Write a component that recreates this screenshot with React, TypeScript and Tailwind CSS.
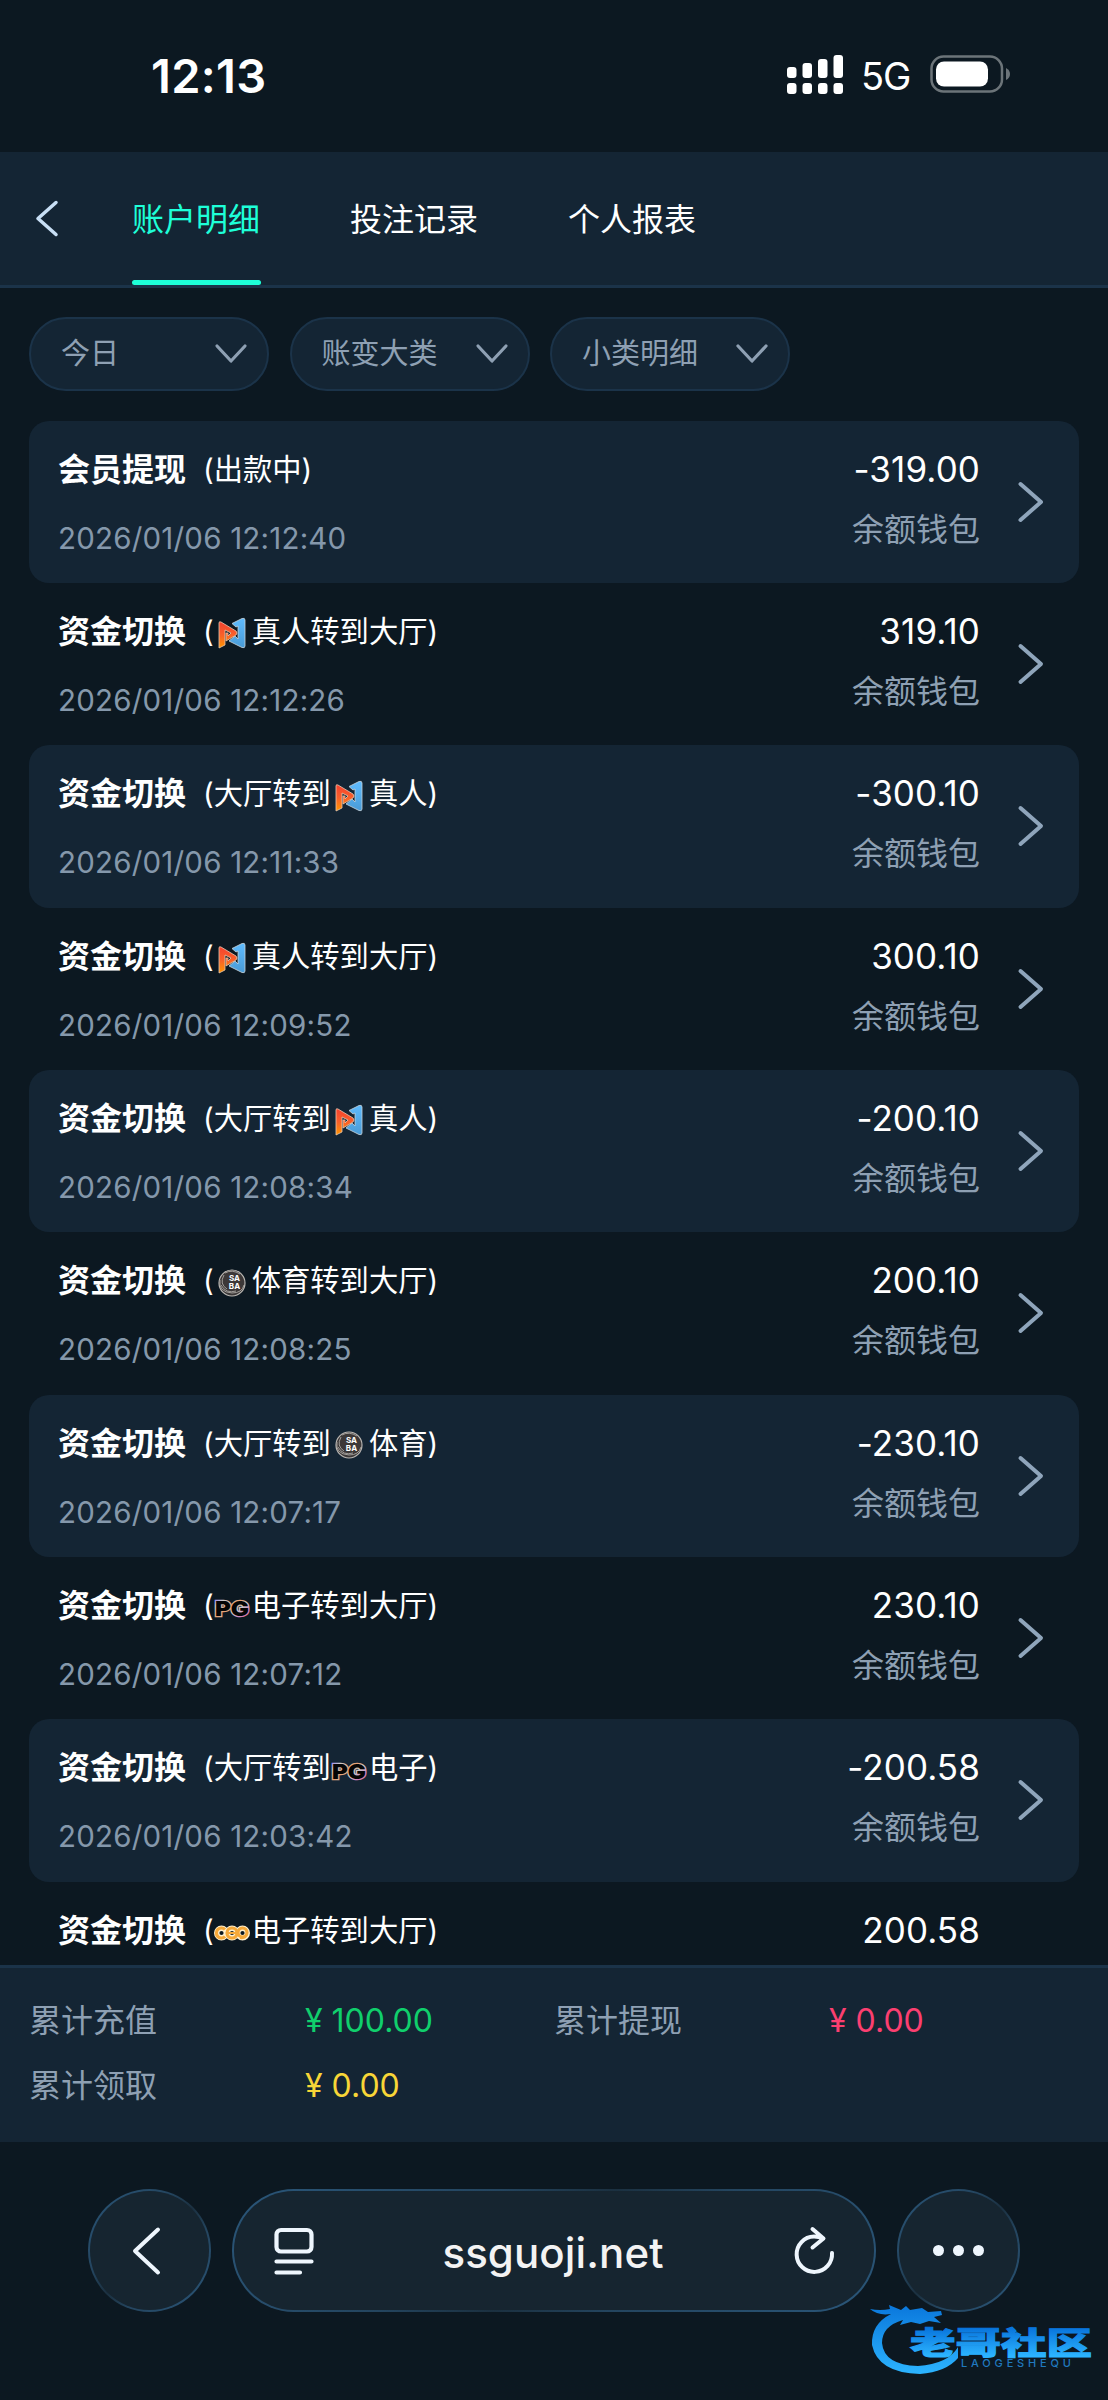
import { ReactNode } from 'react'

type Brand = 'n' | 'saba' | 'pg' | 'cq'

const records: {
  title: string
  from?: string
  brand?: Brand
  to: string
  time?: string
  amount: string
}[] = [
  { title: '会员提现', to: '出款中', time: '2026/01/06 12:12:40', amount: '-319.00' },
  { title: '资金切换', brand: 'n', to: '真人转到大厅', time: '2026/01/06 12:12:26', amount: '319.10' },
  { title: '资金切换', from: '大厅转到', brand: 'n', to: '真人', time: '2026/01/06 12:11:33', amount: '-300.10' },
  { title: '资金切换', brand: 'n', to: '真人转到大厅', time: '2026/01/06 12:09:52', amount: '300.10' },
  { title: '资金切换', from: '大厅转到', brand: 'n', to: '真人', time: '2026/01/06 12:08:34', amount: '-200.10' },
  { title: '资金切换', brand: 'saba', to: '体育转到大厅', time: '2026/01/06 12:08:25', amount: '200.10' },
  { title: '资金切换', from: '大厅转到', brand: 'saba', to: '体育', time: '2026/01/06 12:07:17', amount: '-230.10' },
  { title: '资金切换', brand: 'pg', to: '电子转到大厅', time: '2026/01/06 12:07:12', amount: '230.10' },
  { title: '资金切换', from: '大厅转到', brand: 'pg', to: '电子', time: '2026/01/06 12:03:42', amount: '-200.58' },
  { title: '资金切换', brand: 'cq', to: '电子转到大厅', amount: '200.58' },
]

const tabs = ['账户明细', '投注记录', '个人报表']
const filters = ['今日', '账变大类', '小类明细']

const BrandIcon = ({ brand }: { brand: Brand }) => {
  if (brand === 'n') {
    return (
      <svg viewBox="0 0 36 36" className="w-9 h-9">
        <defs>
          <linearGradient id="nOrange" x1="0" y1="0" x2="0" y2="1">
            <stop offset="0" stopColor="#f5412f" />
            <stop offset="0.5" stopColor="#f8602a" />
            <stop offset="1" stopColor="#ff9600" />
          </linearGradient>
          <linearGradient id="nBlue" x1="0" y1="0" x2="0" y2="1">
            <stop offset="0" stopColor="#5fbcff" />
            <stop offset="1" stopColor="#4a9bd6" />
          </linearGradient>
        </defs>
        <path d="M18 8.500L28 3.500Q31 2.500 31 5V31Q31 33.500 28 32.500L15 26L21 21L24 24V11L22 12Z" fill="url(#nBlue)" stroke="#c8d4dc" strokeWidth="0.800" />
        <path d="M5 8Q5 6 7 7L22 16Q24 18 22 20L12 26V18H14V21L17 18L11 15V30L5 33Z" fill="url(#nOrange)" stroke="#e8c8b0" strokeWidth="0.800" />
      </svg>
    )
  }
  if (brand === 'saba') {
    return (
      <svg viewBox="0 0 36 36" className="w-9 h-9">
        <circle cx="18" cy="18" r="13" fill="#3c3838" stroke="#b9b6b2" strokeWidth="1.200" />
        <path d="M6 15Q4 27 18 28Q28 28 30 20M7 20Q12 29 22 26M10 10Q5 19 13 24M11 8Q18 4 26 9" fill="none" stroke="#aaa7a3" strokeWidth="0.900" />
        <text x="20.500" y="16" textAnchor="middle" fontSize="8" fontWeight="700" fill="#fff">SA</text>
        <text x="20.500" y="23.500" textAnchor="middle" fontSize="8" fontWeight="700" fill="#fff">BA</text>
      </svg>
    )
  }
  if (brand === 'pg') {
    return (
      <svg viewBox="0 0 36 36" className="w-9 h-9 overflow-visible">
        <defs>
          <linearGradient id="pgEdge" x1="0" y1="0" x2="1" y2="1">
            <stop offset="0" stopColor="#8a6cff" />
            <stop offset="0.200" stopColor="#c9c9c9" />
            <stop offset="0.450" stopColor="#e9a070" />
            <stop offset="0.600" stopColor="#c9c9c9" />
            <stop offset="0.800" stopColor="#d07fc0" />
            <stop offset="1" stopColor="#ff7a35" />
          </linearGradient>
        </defs>
        <text
          x="1"
          y="26.500"
          fontSize="20"
          fontWeight="900"
          textLength="34"
          lengthAdjust="spacingAndGlyphs"
          fill="#050505"
          stroke="url(#pgEdge)"
          strokeWidth="2.400"
          paintOrder="stroke"
        >
          PG
        </text>
      </svg>
    )
  }
  return (
    <svg viewBox="0 0 36 36" className="w-9 h-9">
      <g fill="none" stroke="#fff0cf" strokeWidth="5.400">
        <circle cx="7.500" cy="19" r="4.800" />
        <circle cx="18" cy="19" r="4.800" />
        <circle cx="28.500" cy="19" r="4.800" />
      </g>
      <g fill="none" stroke="#f6a93a" strokeWidth="3.200">
        <path d="M11 15.500A5 5 0 1 0 11 22.500" />
        <circle cx="18" cy="19" r="5" />
        <circle cx="28.500" cy="18.500" r="4.500" />
        <path d="M14 19H22M33 19Q33 25 26 24" strokeWidth="2" />
      </g>
    </svg>
  )
}

const Glass = ({ className, children }: { className: string; children: ReactNode }) => (
  <div className="h-[123px] rounded-full p-[2px] bg-[linear-gradient(135deg,#2a5679_0%,#24455f_35%,#1b3040_50%,#24455f_65%,#2a5679_100%)]">
    <div className={`h-full rounded-full bg-[#162530] flex items-center ${className}`}>{children}</div>
  </div>
)

const StatusBar = () => (
  <div className="h-[152px] flex items-start justify-between pl-[151px] pr-[96px] text-white">
    <div className="mt-[48px] text-[47px] leading-[56px] font-semibold tracking-[0.300px]">12:13</div>
    <div className="mt-[47px] h-[56px] flex items-center">
      <svg viewBox="0 0 58 42" className="w-[58px] h-[42px] -mt-[2px]" fill="#fff">
        <rect x="0" y="14" width="9.500" height="11" rx="3" />
        <rect x="15.500" y="10" width="9.500" height="15" rx="3" />
        <rect x="31" y="6" width="9.500" height="19" rx="3" />
        <rect x="46.500" y="2" width="9.500" height="23" rx="3" />
        <rect x="0" y="30" width="9.500" height="11" rx="3" />
        <rect x="15.500" y="30" width="9.500" height="11" rx="3" />
        <rect x="31" y="30" width="9.500" height="11" rx="3" />
        <rect x="46.500" y="30" width="9.500" height="11" rx="3" />
      </svg>
      <span className="ml-[16px] mt-[2px] w-[53px] text-[38px] tracking-[-1px]">5G</span>
      <svg viewBox="0 0 82 38" className="ml-[16px] w-[82px] h-[38px] -mt-[2px]">
        <rect x="1.500" y="1.500" width="70.500" height="35" rx="12" fill="none" stroke="#6c7479" strokeWidth="2.500" />
        <rect x="6" y="6.500" width="52" height="25" rx="8" fill="#fff" />
        <path d="M76 13Q80 15 80 19T76 25Z" fill="#6c7479" />
      </svg>
    </div>
  </div>
)

const Header = () => (
  <div className="h-[136px] bg-[#142534] border-b-[3px] border-[#1b3349] flex pl-[34px]">
    <svg viewBox="0 0 26 40" className="w-[26px] h-[40px] mt-[47px]" fill="none" stroke="#c8dff5" strokeWidth="3.500" strokeLinecap="round" strokeLinejoin="round">
      <path d="M22 3.500L4 19.500L22 35.500" />
    </svg>
    <div className="ml-[72px] flex gap-[89px]">
      {tabs.map((t, i) => (
        <div
          key={t}
          className={`w-[129px] whitespace-nowrap text-[32px] flex flex-col ${
            i === 0 ? 'text-[#1effd8]' : 'text-white'
          }`}
        >
          <span className="h-[128px] leading-[135px]">{t}</span>
          {i === 0 && <div className="h-[5px] rounded-full bg-[#1effd8]" />}
        </div>
      ))}
    </div>
  </div>
)

const Filters = () => (
  <div className="flex gap-[20.500px] px-[29px] pt-[29px] pb-[30px]">
    {filters.map((f) => (
      <div
        key={f}
        className="w-[240px] h-[73.500px] rounded-full border-2 border-[#1b3349] bg-[#142534] text-[#8ea0b3] text-[29px] flex items-center justify-between pl-[30px] pr-[19px]"
      >
        <span>{f}</span>
        <svg viewBox="0 0 34 22" className="w-[34px] h-[22px]" fill="none" stroke="currentColor" strokeWidth="3.200" strokeLinecap="round" strokeLinejoin="round">
          <path d="M3 3L17 18L31 3" />
        </svg>
      </div>
    ))}
  </div>
)

const RecordList = () => (
  <div className="h-[1544.500px] overflow-hidden px-[29px]">
    {records.map((r, i) => (
      <div
        key={i}
        className={`h-[162.350px] rounded-[20px] flex pl-[29px] pr-[34px] ${i % 2 === 0 ? 'bg-[#142534]' : ''}`}
      >
        <div className="flex-1">
          <div className="mt-[26px] h-[46px] flex items-center text-white">
            <span className="text-[32px] font-bold">{r.title}</span>
            <span className="ml-[17px] text-[29.300px] flex items-center whitespace-nowrap">
              <span>({r.from}</span>
              {r.brand && (
                <span className="mt-[3px] mr-[2px]">
                  <BrandIcon brand={r.brand} />
                </span>
              )}
              <span>{r.to})</span>
            </span>
          </div>
          {r.time && (
            <div className="mt-[25px] text-[29.500px] leading-[40px] tracking-[0.200px] text-[#8598ab]">{r.time}</div>
          )}
        </div>
        <div className="text-right">
          <div className="mt-[25px] text-[35px] leading-[46px] tracking-[0.100px] text-white">{r.amount}</div>
          {r.time && <div className="mt-[15px] text-[32px] leading-[46px] text-[#8ea0b3]">余额钱包</div>}
        </div>
        <div className="ml-[35px] w-[30px] pt-[58px]">
          {r.time && (
            <svg viewBox="0 0 30 46" className="w-[30px] h-[46px]" fill="none" stroke="#8fa5bb" strokeWidth="4" strokeLinecap="round" strokeLinejoin="round">
              <path d="M5.500 5L26 23L5.500 41" />
            </svg>
          )}
        </div>
      </div>
    ))}
  </div>
)

const Summary = () => (
  <div className="h-[177px] bg-[#142534] border-t-[3px] border-[#1b3349] pl-[29px] pt-[20px] grid grid-cols-[276px_249px_275px_1fr] auto-rows-[65px] items-center content-start text-[32px] text-[#8ea0b3]">
    <span>累计充值</span>
    <span className="text-[#10cf6c]">¥ 100.00</span>
    <span>累计提现</span>
    <span className="text-[#fb3f70]">¥ 0.00</span>
    <span>累计领取</span>
    <span className="text-[#f8d637]">¥ 0.00</span>
  </div>
)

const BrowserBar = () => (
  <div className="flex gap-[21px] pl-[88px] pt-[47px] text-[#eef6fd]">
    <Glass className="w-[119px] justify-center">
      <svg viewBox="0 0 32 52" className="w-[32px] h-[52px] mr-[8px]" fill="none" stroke="currentColor" strokeWidth="4" strokeLinecap="round" strokeLinejoin="round">
        <path d="M28 4.500L5 26L28 47.500" />
      </svg>
    </Glass>
    <Glass className="w-[640px] justify-between pl-[40px] pr-[38px]">
      <svg viewBox="0 0 40 48" className="w-[40px] h-[48px]" fill="none" stroke="currentColor" strokeWidth="4.200" strokeLinecap="round">
        <rect x="2.500" y="3" width="35" height="21.500" rx="4.500" />
        <path d="M2.500 34.500H37.500M2.500 45.500H26" />
      </svg>
      <span className="mt-[3px] text-[42px] font-medium tracking-[0.100px] text-[#f3f3f3]">ssguoji.net</span>
      <svg viewBox="0 0 44 50" className="w-[44px] h-[50px]" fill="none" stroke="currentColor" strokeWidth="4" strokeLinecap="round" strokeLinejoin="round">
        <path d="M40 27A17.700 17.700 0 1 1 22 10.500Q27 10.500 31 12.500M20.500 3L31.500 12.500L20.500 21.500" />
      </svg>
    </Glass>
    <Glass className="w-[119px] justify-center gap-[9px]">
      <i className="w-[11px] h-[11px] rounded-full bg-[#eef6fd]" />
      <i className="w-[11px] h-[11px] rounded-full bg-[#eef6fd]" />
      <i className="w-[11px] h-[11px] rounded-full bg-[#eef6fd]" />
    </Glass>
  </div>
)

const Watermark = () => (
  <svg viewBox="0 0 258 120" className="absolute right-0 bottom-0 w-[258px] h-[120px]">
    <defs>
      <linearGradient id="mark" gradientUnits="userSpaceOnUse" x1="0" y1="26" x2="0" y2="94">
        <stop offset="0" stopColor="#0a78dc" />
        <stop offset="1" stopColor="#2cb4ff" />
      </linearGradient>
      <linearGradient id="markText" gradientUnits="userSpaceOnUse" x1="0" y1="48" x2="0" y2="76">
        <stop offset="0" stopColor="#0874dc" />
        <stop offset="1" stopColor="#2cb4ff" />
      </linearGradient>
    </defs>
    <path
      d="M20 29Q30 31 40 29L39 25L51 30L56 26L60 30L72 28L78 32L91 31L92 35L84 37L91 43L79 41L70 44L61 42L50 45L53 40Q32 46 32 63Q34 85 68 86Q98 84 108 67L108 78Q96 92 70 94Q28 93 22 65Q21 44 41 34Q28 36 20 29Z"
      fill="url(#mark)"
    />
    <text x="60" y="74" fontSize="31" fontWeight="900" textLength="182" lengthAdjust="spacingAndGlyphs" fill="url(#markText)" stroke="url(#markText)" strokeWidth="1">
      老哥社区
    </text>
    <text x="111" y="87" fontSize="11" fontWeight="500" textLength="110" fill="#2079bf">
      LAOGESHEQU
    </text>
  </svg>
)

const App = () => {
  return (
    <div className="relative w-[1108px] h-[2400px] overflow-hidden bg-[#0c1821] font-[Inter,'Noto_Sans_CJK_SC',sans-serif]">
      <StatusBar />
      <Header />
      <Filters />
      <RecordList />
      <Summary />
      <BrowserBar />
      <Watermark />
    </div>
  )
}

export default App
